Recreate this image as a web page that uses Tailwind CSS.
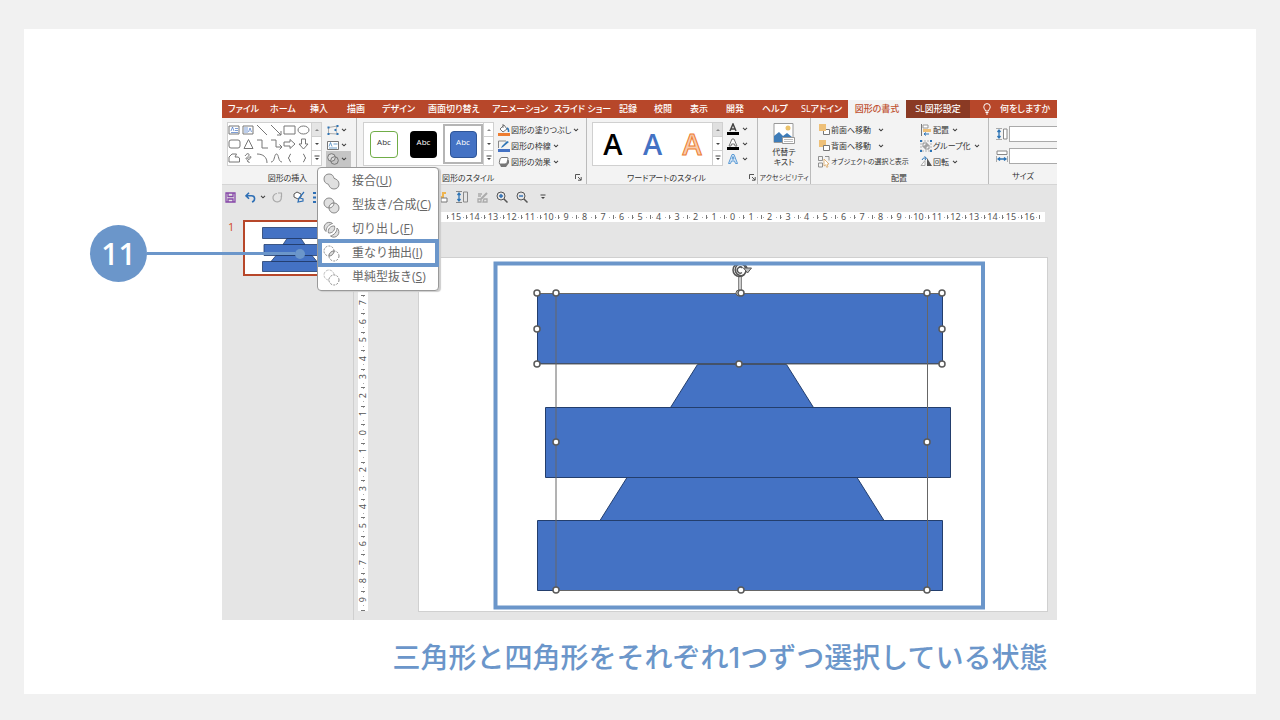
<!DOCTYPE html>
<html lang="ja">
<head>
<meta charset="utf-8">
<title>図形の結合</title>
<script src="https://cdn.jsdelivr.net/npm/@tailwindcss/browser@4"></script>
</head>
<body class="min-h-screen bg-[#f1f1f1] px-6 pt-[29px] pb-[26px] font-['Open_Sans','Noto_Sans_CJK_JP',sans-serif] [font-feature-settings:'palt']">
<svg class="hidden">
  <symbol id="chev" viewBox="0 0 6 4"><path d="M1 .8l2 2 2-2" fill="none" stroke="#444" stroke-width="1.1"/></symbol>
  <symbol id="tri-up" viewBox="0 0 6 4"><path d="M1 3h4L3 1z" fill="#888"/></symbol>
  <symbol id="tri-down" viewBox="0 0 6 4"><path d="M1 1h4L3 3z" fill="#444"/></symbol>
  <symbol id="more" viewBox="0 0 6 6"><path d="M.5 1h5" stroke="#444"/><path d="M1 3h4L3 5z" fill="#444"/></symbol>
  <symbol id="launch" viewBox="0 0 7 7"><path d="M.5 5V.5H5M3 3l3 3M6.2 3v3.2H3" fill="none" stroke="#555"/></symbol>
</svg>

<main class="relative bg-white pt-[71px] pb-[18px]">
  <section class="relative mr-[199px] ml-[198px] flex flex-col bg-[#e5e5e5] text-[#333]">

    <!-- Ribbon tabs -->
    <nav class="flex h-[18px] bg-[#b7472a] text-[9px] leading-[16px] font-medium whitespace-nowrap text-white">
      <div class="grid min-w-0 flex-1 grid-cols-[42fr_40fr_37fr_35fr_46fr_64fr_62fr_65fr_35fr_36fr_36fr_36fr_39fr_47fr] pl-[6px] text-left [&>button]:min-w-0 [&>button]:text-left">
        <button>ファイル</button><button>ホーム</button><button>挿入</button><button>描画</button><button>デザイン</button><button>画面切り替え</button><button>アニメーション</button><button>スライド ショー</button><button>記録</button><button>校閲</button><button>表示</button><button>開発</button><button>ヘルプ</button><button>SLアドイン</button>
      </div>
      <button class="w-[58px] bg-[#f3f3f3] text-[#c0502f]">図形の書式</button>
      <button class="w-[64px] bg-[#8a3a24]">SL図形設定</button>
      <button class="flex w-[87px] items-center gap-2 pl-3">
        <svg class="h-3 w-2.5" viewBox="0 0 8 12" fill="none" stroke="white"><path d="M2.500 8C2.500 6.500.8 6 .8 3.800a3.200 3.200 0 016.400 0C7.200 6 5.500 6.500 5.500 8zM2.500 9.500h3M3 11h2"/></svg>
        何をしますか
      </button>
    </nav>

    <!-- Ribbon -->
    <div class="flex h-[67px] border-b border-[#d5d5d5] bg-[#f3f3f3] text-[8px] leading-[16px] whitespace-nowrap">
      <div class="relative flex w-[134px] flex-col pt-1 pl-[5px]">
        <div class="flex h-[44px] gap-1">
          <div class="flex w-[95px] border border-[#d0d0d0] bg-white">
            <div class="grid w-[84px] grid-cols-6 grid-rows-3 [&_svg]:h-[12px] [&_svg]:w-[13px] [&_svg]:fill-none [&_svg]:stroke-[#777]">
              <button aria-label="テキスト"><svg viewBox="0 0 13 12"><path d="M1 2h10v8H1z"/><path d="M3 7l1.500-4L6 7M7 4.500h3M7 6.500h3M3 8.500h7" stroke="#4472c4" stroke-width=".7"/></svg></button>
              <button aria-label="縦書き"><svg viewBox="0 0 13 12"><path d="M1 2h10v8H1z"/><path d="M3 3v6M5 3v6M6.500 8l1.500-4 1.500 4" stroke="#4472c4" stroke-width=".7"/></svg></button>
              <button aria-label="線"><svg viewBox="0 0 13 12"><path d="M1 1l10 10"/></svg></button>
              <button aria-label="矢印"><svg viewBox="0 0 13 12"><path d="M1 1l10 10M11 7v4H7"/></svg></button>
              <button aria-label="四角形"><svg viewBox="0 0 13 12"><path d="M1 2h11v8H1z"/></svg></button>
              <button aria-label="楕円"><svg viewBox="0 0 13 12"><ellipse cx="6.500" cy="6" rx="5.500" ry="4"/></svg></button>
              <button aria-label="角丸"><svg viewBox="0 0 13 12"><rect x="1" y="2" width="11" height="8" rx="2"/></svg></button>
              <button aria-label="三角形"><svg viewBox="0 0 13 12"><path d="M6.500 1.500L11 10.500H2z"/></svg></button>
              <button aria-label="カギ線"><svg viewBox="0 0 13 12"><path d="M1 2h5v8h6"/></svg></button>
              <button aria-label="カギ線矢印"><svg viewBox="0 0 13 12"><path d="M1 2h5v7h6M9.500 6.500L12 9l-2.500 2.500"/></svg></button>
              <button aria-label="右矢印"><svg viewBox="0 0 13 12"><path d="M1 4h6V1.500L12 6l-5 4.500V8H1z"/></svg></button>
              <button aria-label="下矢印"><svg viewBox="0 0 13 12"><path d="M4.500 1h4v5H11l-4.500 5L2 6h2.500z"/></svg></button>
              <button aria-label="フリーフォーム"><svg viewBox="0 0 13 12"><path d="M1 10V5l3-3h4.500L7 5h3l1.500 1v4z"/></svg></button>
              <button aria-label="フリーハンド"><svg viewBox="0 0 13 12"><path d="M3 4c2-3 4-3 4-1S3 6 4 7s5-4 5-2-4 3-4 4 3 0 2 2"/></svg></button>
              <button aria-label="円弧"><svg viewBox="0 0 13 12"><path d="M1 2c6 0 10 3 10 9"/></svg></button>
              <button aria-label="曲線"><svg viewBox="0 0 13 12"><path d="M1 10c4 0 3-8 5.500-8S8 10 12 10"/></svg></button>
              <button aria-label="左中かっこ"><svg viewBox="0 0 13 12"><path d="M8 2C6 2 7 6 5 6c2 0 1 4 3 4"/></svg></button>
              <button aria-label="右中かっこ"><svg viewBox="0 0 13 12"><path d="M6 2c2 0 1 4 3 4-2 0-1 4-3 4"/></svg></button>
            </div>
            <div class="ml-auto grid w-[10px] grid-rows-3 divide-y divide-[#d0d0d0] border-l border-[#d0d0d0] [&>button]:flex [&>button]:items-center [&>button]:justify-center">
              <button aria-label="上へ" class="bg-[#e5e5e5]"><svg class="h-1 w-1.5"><use href="#tri-up"/></svg></button>
              <button aria-label="下へ"><svg class="h-1 w-1.5"><use href="#tri-down"/></svg></button>
              <button aria-label="その他"><svg class="h-1.5 w-1.5"><use href="#more"/></svg></button>
            </div>
          </div>
          <div class="grid w-[25px] grid-rows-3 [&>button]:flex [&>button]:h-[16px] [&>button]:items-center [&>button]:gap-0.5 [&>button]:pl-px">
            <button aria-label="図形の編集"><svg class="h-3 w-3" viewBox="0 0 12 12" fill="none"><path d="M1.500 3.500l9-1.500-2 4 2 4-9-.5z" stroke="#999" stroke-width=".8"/><path d="M.5 2.500h2v2h-2zM9.500 1h2v2h-2zM7.500 5h2v2h-2zM.5 9h2v2h-2zM9.500 9h2v2h-2z" fill="#2e75b6"/></svg><svg class="h-1 w-1.5"><use href="#chev"/></svg></button>
            <button aria-label="テキスト ボックス"><svg class="h-3 w-3" viewBox="0 0 12 12" fill="none"><path d="M.5 2.500h11v8H.5z" fill="#fff" stroke="#777"/><path d="M2 7.500l1.500-4L5 7.500M6.500 5h4M2 9h8" stroke="#2e75b6" stroke-width=".7"/></svg><svg class="h-1 w-1.5"><use href="#chev"/></svg></button>
            <button aria-label="図形の結合" class="bg-[#c5c5c5]"><svg class="h-3 w-3" viewBox="0 0 12 12" fill="#ddd" stroke="#777"><circle cx="4.500" cy="4.500" r="3.800"/><circle cx="7.500" cy="7.500" r="3.800" fill="none"/></svg><svg class="h-1 w-1.5"><use href="#chev"/></svg></button>
          </div>
        </div>
        <p class="mt-1 pr-2 text-center">図形の挿入</p>
      </div>

      <div class="relative flex w-[230px] flex-col border-l border-[#bbb] pt-1 pl-[6px]">
        <div class="flex h-[44px] gap-1 text-[8px]">
          <div class="flex w-[131px] border border-[#d0d0d0] bg-white">
            <div class="flex flex-1 items-center">
              <button class="ml-[6px] h-[27px] w-[28px] rounded border border-[#70ad47] pb-1">Abc</button>
              <button class="ml-3 h-[27px] w-[27px] rounded bg-black pb-1 text-white">Abc</button>
              <span class="ml-[6px] flex h-[40px] w-[40px] items-center justify-center border-2 border-[#b5b5b5]"><button class="h-[27px] w-[27px] rounded border border-[#2f5597] bg-[#4472c4] pb-1 text-white">Abc</button></span>
            </div>
            <div class="grid w-[10px] grid-rows-3 divide-y divide-[#d0d0d0] border-l border-[#d0d0d0] [&>button]:flex [&>button]:items-center [&>button]:justify-center">
              <button aria-label="上へ"><svg class="h-1 w-1.5"><use href="#tri-up"/></svg></button>
              <button aria-label="下へ"><svg class="h-1 w-1.5"><use href="#tri-down"/></svg></button>
              <button aria-label="その他"><svg class="h-1.5 w-1.5"><use href="#more"/></svg></button>
            </div>
          </div>
          <div class="flex flex-col [&>button]:flex [&>button]:h-[16px] [&>button]:items-center [&>button]:gap-px">
            <button><svg class="h-3 w-3" viewBox="0 0 12 12"><path d="M0 9h12v3H0z" fill="#ed7d31"/><path d="M2 5l4-4 3 4-4 3zM5 0v4" fill="#fff" stroke="#777"/><path d="M9 4q2 1 1.500 4" fill="none" stroke="#2e75b6" stroke-width="1.500"/></svg>図形の塗りつぶし<svg class="ml-px h-1 w-1.5"><use href="#chev"/></svg></button>
            <button><svg class="h-3 w-3" viewBox="0 0 12 12"><path d="M0 9h12v3H0z" fill="#4472c4"/><path d="M8 1H.5v7" fill="none" stroke="#888"/><path d="M3 8l1-2 5-5 2 1-6 5z" fill="#2e75b6"/></svg>図形の枠線<svg class="ml-px h-1 w-1.5"><use href="#chev"/></svg></button>
            <button><svg class="h-3 w-3" viewBox="0 0 12 12"><path d="M1 7l2 4h5l3-4V4z" fill="#777"/><path d="M4 1.500h5q1.500 0 1 1.500L9 6.500Q8.500 8 7 8H2.500Q1 8 1.300 6.500L2 3q.5-1.500 2-1.500z" fill="#fff" stroke="#777"/></svg>図形の効果<svg class="ml-px h-1 w-1.5"><use href="#chev"/></svg></button>
          </div>
        </div>
        <p class="mt-1 pl-[79px]">図形のスタイル</p>
        <button aria-label="図形の書式設定" class="absolute right-1 bottom-[3px]"><svg class="h-[7px] w-[7px]"><use href="#launch"/></svg></button>
      </div>

      <div class="relative flex w-[171px] flex-col border-l border-[#bbb] pt-1 pl-[5px]">
        <div class="flex h-[44px] gap-1">
          <div class="flex w-[131px] border border-[#d0d0d0] bg-white">
            <div class="grid flex-1 grid-cols-3 items-center text-[29px] leading-[40px] font-semibold">
              <button aria-label="塗りつぶし 黒" class="text-black">A</button>
              <button aria-label="塗りつぶし 青" class="text-[#4472c4]">A</button>
              <button aria-label="塗りつぶし オレンジ" class="text-[#f8cbad] [-webkit-text-stroke:1px_#ed7d31]">A</button>
            </div>
            <div class="grid w-[10px] grid-rows-3 divide-y divide-[#d0d0d0] border-l border-[#d0d0d0] [&>button]:flex [&>button]:items-center [&>button]:justify-center">
              <button aria-label="上へ" class="bg-[#e0e0e0]"><svg class="h-1 w-1.5"><use href="#tri-up"/></svg></button>
              <button aria-label="下へ"><svg class="h-1 w-1.5"><use href="#tri-down"/></svg></button>
              <button aria-label="その他"><svg class="h-1.5 w-1.5"><use href="#more"/></svg></button>
            </div>
          </div>
          <div class="flex flex-col [&>button]:flex [&>button]:h-[16px] [&>button]:items-center [&>button]:gap-[3px]">
            <button aria-label="文字の塗りつぶし"><svg class="h-3 w-3" viewBox="0 0 12 12"><path d="M0 9h12v3H0z"/><path d="M3 8l3-7 3 7M4 6h4" fill="none" stroke="#444" stroke-width="1.500"/></svg><svg class="h-1 w-1.5"><use href="#chev"/></svg></button>
            <button aria-label="文字の輪郭"><svg class="h-3 w-3" viewBox="0 0 12 12"><path d="M0 9h12v3H0z"/><path d="M2 8l3-7h2l3 7H8L7.500 6h-3L4 8z" fill="#fff" stroke="#777"/></svg><svg class="h-1 w-1.5"><use href="#chev"/></svg></button>
            <button aria-label="文字の効果"><svg class="h-3 w-3" viewBox="0 0 12 12"><path d="M1.500 10.500L5 1.500h2l3.500 9h-2l-1-2.500h-3l-1 2.500zM5 6h2L6 3.500z" fill="#dce9f7" stroke="#5b9bd5"/></svg><svg class="h-1 w-1.5"><use href="#chev"/></svg></button>
          </div>
        </div>
        <p class="mt-1 pr-4 text-center">ワードアートのスタイル</p>
        <button aria-label="文字の効果の設定" class="absolute right-px bottom-[3px]"><svg class="h-[7px] w-[7px]"><use href="#launch"/></svg></button>
      </div>

      <div class="flex w-[53px] flex-col items-center border-l border-[#bbb] pt-1">
        <button class="flex h-[44px] flex-col items-center pt-px leading-[10px]">
          <svg class="mb-0.5 h-[22px] w-[22px] shrink-0" viewBox="0 0 22 22"><path d="M1 .5h19v19H1z" fill="#fff" stroke="#999"/><circle cx="15" cy="5" r="2.500" fill="#ecc36b"/><path d="M1 19v-6l5-4 4 4 4-3 5 4v5z" fill="#3e7cb8"/><path d="M9.500 14.500h12v6h-12z" fill="#fff" stroke="#999"/><path d="M11 16.500h9M11 18.500h9" stroke="#bbb"/></svg>
          <span>代替テ<br>キスト</span>
        </button>
        <p class="mt-1 text-[7px]">アクセシビリティ</p>
      </div>

      <div class="flex w-[178px] flex-col border-l border-[#bbb] pt-1 pl-[7px]">
        <div class="flex h-[44px] [&_button]:flex [&_button]:h-[16px] [&_button]:items-center [&_button]:gap-px">
          <div class="flex w-[102px] flex-col">
            <button><svg class="h-3 w-3" viewBox="0 0 12 12"><path d="M5.500 5.500h6v5h-6z" fill="#fff" stroke="#777"/><path d="M1 0h7v7H1z" fill="#eec078"/></svg>前面へ移動<svg class="ml-1.5 h-1 w-1.5"><use href="#chev"/></svg></button>
            <button><svg class="h-3 w-3" viewBox="0 0 12 12"><path d="M1 0h7v7H1z" fill="#eec078"/><path d="M5.500 5.500h6v5h-6z" fill="#fff" stroke="#777"/></svg>背面へ移動<svg class="ml-1.5 h-1 w-1.5"><use href="#chev"/></svg></button>
            <button class="text-[7px]"><svg class="h-3 w-3 shrink-0" viewBox="0 0 12 12" fill="none" stroke="#777"><path d="M.5.5h4v4h-4zM.5 7h4v4h-4zM7 .5h4v4" stroke-width=".8"/><path d="M6 3l5 5-2 .3 1 2.500-1.300.5-1-2.500L6 10z" fill="#fff" stroke="#d9a560" stroke-width=".8"/></svg>オブジェクトの選択と表示</button>
          </div>
          <div class="flex flex-col">
            <button><svg class="h-3 w-3" viewBox="0 0 12 12"><path d="M1.500 0v12" stroke="#777"/><path d="M3 1h5v3H3z" fill="#fff" stroke="#999"/><path d="M3 5h8v3H3z" fill="#eec078"/><path d="M9 10H4M6 8.500L4 10l2 1.500" fill="none" stroke="#2e75b6"/></svg>配置<svg class="ml-0.5 h-1 w-1.5"><use href="#chev"/></svg></button>
            <button><svg class="h-3 w-3" viewBox="0 0 12 12" fill="none"><path d="M1 1h10v10H1z" stroke="#999" stroke-width=".7" stroke-dasharray="2 1"/><path d="M3 3h4v4H3zM5 5h4v4H5z" stroke="#777" stroke-width=".8"/><path d="M0 0h2v2H0zM10 0h2v2h-2zM0 10h2v2H0zM10 10h2v2h-2z" fill="#2e75b6"/></svg>グループ化<svg class="ml-0.5 h-1 w-1.5"><use href="#chev"/></svg></button>
            <button><svg class="h-3 w-3" viewBox="0 0 12 12"><path d="M1 9.500l4-5v5z" fill="#fff" stroke="#999" stroke-width=".8"/><path d="M7 2l5 8H7z" fill="#555"/><path d="M2 4q1-3 4-2M4.500.5L6.500 2 5 4" fill="none" stroke="#2e75b6"/></svg>回転<svg class="ml-0.5 h-1 w-1.5"><use href="#chev"/></svg></button>
          </div>
        </div>
        <p class="mt-1 pr-2 text-center">配置</p>
      </div>

      <div class="flex min-w-0 flex-1 flex-col border-l border-[#bbb] pt-1">
        <div class="flex h-[44px] flex-col gap-[6px] pt-1 pl-[7px]">
          <label class="flex items-center gap-px"><svg class="h-3 w-3 shrink-0" viewBox="0 0 12 12" fill="none" aria-label="高さ"><path d="M7.500 1h3.500v10H7.500z" fill="#fff" stroke="#888"/><path d="M0 .5h6M0 11.500h6" stroke="#888" stroke-width=".7"/><path d="M3 2v8M1.500 4L3 2l1.500 2M1.500 8L3 10l1.500-2" stroke="#2e75b6" stroke-width="1.300"/></svg><input class="h-[16px] min-w-0 flex-1 border border-r-0 border-[#aaa] bg-white" aria-label="高さ"></label>
          <label class="flex items-center gap-px"><svg class="h-3 w-3 shrink-0" viewBox="0 0 12 12" fill="none" aria-label="幅"><path d="M1 1h10v3.500H1z" fill="#fff" stroke="#888"/><path d="M.5 6v6M11.500 6v6" stroke="#888" stroke-width=".7"/><path d="M2 9h8M4 7.500L2 9l2 1.500M8 7.500L10 9l-2 1.500" stroke="#2e75b6" stroke-width="1.300"/></svg><input class="h-[16px] min-w-0 flex-1 border border-r-0 border-[#aaa] bg-white" aria-label="幅"></label>
        </div>
        <p class="mt-1 text-center">サイズ</p>
      </div>
    </div>

    <!-- Quick access toolbar -->
    <div class="flex h-[27px] pb-[3px] [&>button]:flex [&>button]:items-center [&>button]:justify-center [&_svg]:fill-none">
      <button class="w-[17px]" aria-label="保存"><svg class="h-[11px] w-[11px]" viewBox="0 0 11 11"><path d="M1 1h9v9H1zM3 1v3.500h5V1M3 10V7h5v3" stroke="#8647a8" stroke-width="1.300"/></svg></button>
      <button class="w-[22px]" aria-label="元に戻す"><svg class="h-[11px] w-[11px]" viewBox="0 0 11 11"><path d="M4 .8L1 3.800l3 3M1 3.800h5.500c4 0 4 5 .5 6.200" stroke="#2e6fb5" stroke-width="1.600"/></svg></button>
      <button class="w-[3px]" aria-label="履歴"><svg class="h-1 w-1.5 shrink-0"><use href="#chev"/></svg></button>
      <button class="w-[26px]" aria-label="やり直し"><svg class="h-[11px] w-[11px]" viewBox="0 0 11 11"><path d="M5 1.500A4.200 4.200 0 109 4M6 1h4M9.500 1v4" stroke="#aaa" stroke-width="1.200"/></svg></button>
      <button class="w-[17px]" aria-label="書式"><svg class="h-3 w-3" viewBox="0 0 12 12"><path d="M1 3l3-2 4 2v3L5 8 1 6z" fill="#fff" stroke="#555"/><path d="M11 1L6 7l-1 4 5-1V8l-3-1" stroke="#2e6fb5" stroke-width="1.200"/></svg></button>
      <button class="w-[14px]" aria-label="整列"><svg class="h-[11px] w-[3px]" viewBox="0 0 3 11"><path d="M0 0h3v2H0zM0 4.500h3v2H0zM0 9h3v2H0z" fill="#2e6fb5"/></svg></button>
      <button class="ml-[113px] w-[18px]" aria-label="配置"><svg class="h-3 w-3" viewBox="0 0 12 12"><path d="M1 6h5V2h3" stroke="#eeb44f" stroke-width="2"/><path d="M4 7h6v4H4z" fill="#fff" stroke="#777"/></svg></button>
      <button class="w-[20px]" aria-label="高さ"><svg class="h-3 w-3" viewBox="0 0 12 12"><path d="M7.500 1h4v10h-4z" stroke="#888"/><path d="M0 .5h6M0 11.500h6" stroke="#888"/><path d="M3 2v8M1.500 4L3 2l1.500 2M1.500 8L3 10l1.500-2" stroke="#2e75b6" stroke-width="1.300"/></svg></button>
      <button class="w-[20px]" aria-label="無効"><svg class="h-[11px] w-[11px]" viewBox="0 0 11 11"><path d="M1 2h4M1 4h3M7 7h3v3H6zM1 7h3v3H1z" stroke="#aaa" stroke-width="1.300"/><path d="M10 1L4 7" stroke="#aaa" stroke-width="2"/></svg></button>
      <button class="w-[20px]" aria-label="拡大"><svg class="h-3 w-3" viewBox="0 0 12 12"><circle cx="5" cy="5" r="4" stroke="#555"/><path d="M8 8l3.500 3.500" stroke="#555" stroke-width="1.500"/><path d="M3 5h4M5 3v4" stroke="#2e6fb5" stroke-width="1.400"/></svg></button>
      <button class="w-[20px]" aria-label="縮小"><svg class="h-3 w-3" viewBox="0 0 12 12"><circle cx="5" cy="5" r="4" stroke="#555"/><path d="M8 8l3.500 3.500" stroke="#555" stroke-width="1.500"/><path d="M3 5h4" stroke="#2e6fb5" stroke-width="1.400"/></svg></button>
      <button class="w-[22px]" aria-label="カスタマイズ"><svg class="h-1.5 w-1.5"><use href="#more"/></svg></button>
    </div>

    <!-- Workspace -->
    <div class="flex">
      <aside class="flex w-[132px] gap-[9px] border-r border-[#cfcfcf] pt-[8px] pl-[6px]">
        <span class="w-[6px] pt-px text-[11px] leading-[12px] text-[#d24726]">1</span>
        <svg class="h-[56px] w-[99px] shrink-0" viewBox="0 0 99 56">
          <path d="M1 1h97v54H1z" fill="#fff" stroke="#b7472a" stroke-width="2"/>
          <g fill="#4472c4" stroke="#233e6d" stroke-width=".8"><path d="M19.500 7.500h63v11h-63zM44 18.500h14l4 6H40zM21 24.500h63v11H21zM33 35.500h36l5 6H28zM19.500 41.500h63v10h-63z"/></g>
        </svg>
      </aside>
      <div class="min-w-0 flex-1">
        <div id="hr" class="mr-[12px] ml-[86px] flex h-[10px] items-center bg-white pr-[5px] pl-[7px] font-['Noto_Sans'] text-[9px] leading-[10px] text-[#555]"></div>
        <div class="flex">
          <div id="vr" class="mt-[18px] ml-[4px] flex h-[371px] w-[10px] flex-col bg-white font-['Noto_Sans'] text-[9px] leading-[10px] text-[#555]"></div>
          <div class="min-w-0 flex-1 pt-[35px] pr-[9px] pb-2 pl-[50px]">
            <svg class="block w-full border border-[#d0d0d0] bg-white" viewBox="419 258 628 353">
              <g fill="#4472c4" stroke="#233e6d">
                <path d="M697.500 364.500h89l27 43h-143zM627 477.500h230l27 43H600z"/>
                <path d="M537.500 293.500h405v70h-405zM545.500 407.500h405v70h-405zM537.500 520.500h405v70h-405z"/>
              </g>
              <g fill="none" stroke="#666"><path d="M537 293.500h405M556 293v297.500h371.500V293M537 364h405"/></g>
              <path d="M740 277v15" stroke="#ccc" stroke-width="3"/><path d="M738.500 277v15M741.500 277v15" stroke="#888"/>
              <g fill="none" stroke="#555" stroke-width="1.500"><circle cx="739.500" cy="270" r="6.500"/><path d="M744 275a6 6 0 113-7M742 272.500a3 3 0 11.500-4.500"/></g>
              <path d="M743.500 268h8l-4 5z" fill="#bbb" stroke="#555"/>
              <circle cx="739" cy="293" r="3" fill="#fff" stroke="#5a5a5a"/>
              <g id="handles" fill="#fff" stroke="#5a5a5a" stroke-width="1.500"></g>
              <path d="M495.500 263.500h487.500v344H495.500z" fill="none" stroke="#6b96ca" stroke-width="4"/>
            </svg>
          </div>
        </div>
      </div>
    </div>

    <!-- Merge shapes menu -->
    <div role="menu" class="absolute top-[67px] left-[95px] flex w-[122px] flex-col rounded border border-[#999] bg-white py-px text-[12px] text-[#666] shadow-[2px_1px_1px_#ccc] [font-feature-settings:normal] [&>button]:flex [&>button]:h-6 [&>button]:items-center [&>button]:pl-[5px] [&>button]:whitespace-nowrap [&_svg]:mr-[12px] [&_svg]:h-[17px] [&_svg]:w-[17px] [&_svg]:shrink-0">
      <button role="menuitem"><svg viewBox="0 0 17 17" fill="#e0e0e0" stroke="#8a8a8a"><path d="M6 1c3 0 4.500 1.800 5 4.300C14 6.300 16 8 16 11s-2 5-5 5-4.700-2-5.500-4.700C3 10.700 1 9 1 6s2-5 5-5z"/></svg><span>接合(<u>U</u>)</span></button>
      <button role="menuitem"><svg viewBox="0 0 17 17" fill="#e0e0e0" stroke="#8a8a8a"><circle cx="6" cy="6" r="5"/><circle cx="11" cy="11" r="5"/><path d="M11 6a5 5 0 01-5 5 5 5 0 015-5z" fill="#fff"/></svg><span>型抜き/合成(<u>C</u>)</span></button>
      <button role="menuitem"><svg viewBox="0 0 17 17" fill="#e0e0e0" stroke="#8a8a8a"><path d="M9.500 2.500A5 5 0 103 10.500c0-4 3-7 6.500-8z"/><path d="M7.500 15a5 5 0 006.500-8c0 4-3 7-6.500 8z"/><path d="M11.500 5a5.500 5.500 0 01-6 7 5.500 5.500 0 016-7z"/></svg><span>切り出し(<u>F</u>)</span></button>
      <button role="menuitem"><svg viewBox="0 0 17 17" fill="none" stroke="#8a8a8a"><circle cx="6" cy="6" r="5" stroke-dasharray="2 1.200"/><circle cx="11" cy="11" r="5" stroke-dasharray="2 1.200"/><path d="M11 6a5 5 0 01-5 5 5 5 0 015-5z" fill="#e0e0e0"/></svg><span>重なり抽出(<u>I</u>)</span></button>
      <button role="menuitem"><svg viewBox="0 0 17 17" fill="none" stroke="#8a8a8a"><path d="M11 6a5 5 0 10-5 5" stroke="#c0c0c0" stroke-dasharray="3 1"/><circle cx="11" cy="11" r="5" stroke-dasharray="2 1.200"/></svg><span>単純型抜き(<u>S</u>)</span></button>
      <span class="pointer-events-none absolute top-[71px] -right-px left-0 h-[28px] border-4 border-[#6b96ca]"></span>
    </div>
  </section>

  <p class="mt-[20px] mr-[199px] ml-[359px] text-center font-['Inter','Noto_Sans_CJK_JP',sans-serif] text-[28px] leading-[36px] font-medium whitespace-nowrap text-[#6b96ca] [font-feature-settings:normal]">三角形と四角形をそれぞれ1つずつ選択している状態</p>

  <!-- Step callout -->
  <div class="absolute top-[196px] left-[66px] flex w-[215px] items-center">
    <span class="flex h-[57px] w-[57px] shrink-0 items-center justify-center rounded-full bg-[#6b96ca] text-[30px] leading-none font-semibold text-white">11</span>
    <span class="h-[3px] flex-1 bg-[#6b96ca]"></span>
    <span class="h-[10px] w-[10px] shrink-0 rounded-full bg-[#6b96ca]"></span>
  </div>
</main>

<script>
const tickH = '<i class="h-[4px] w-px shrink-0 bg-[#777]"></i>';
const tickV = '<i class="h-px w-[4px] shrink-0 bg-[#777]"></i>';
const dot = '<i class="size-px shrink-0 bg-[#aaa]"></i>';
const hr = document.getElementById('hr');
let h = tickH;
for (let n = -15; n <= 16; n++) {
  h += `<span class="flex min-w-0 flex-1 items-center justify-between">${dot}<span>${Math.abs(n)}</span>${dot}${tickH}</span>`;
}
hr.innerHTML = h;
let v = '';
for (let n = -10; n <= 9; n++) {
  v += `<span class="flex min-h-0 flex-1 flex-col items-center justify-between">${dot}<span class="rotate-180 [writing-mode:vertical-rl]">${Math.abs(n)}</span>${dot}${tickV}</span>`;
}
document.getElementById('vr').innerHTML = v;
const points = [[537,293],[556,293],[741,293],[927,293],[942,293],[537,329],[942,329],[537,364],[739,364],[942,364],[556,442],[927,442],[556,590],[741,590],[927,590]];
document.getElementById('handles').innerHTML = points.map(([x, y]) => `<circle cx="${x}" cy="${y}" r="3"/>`).join('');
</script>
</body>
</html>
